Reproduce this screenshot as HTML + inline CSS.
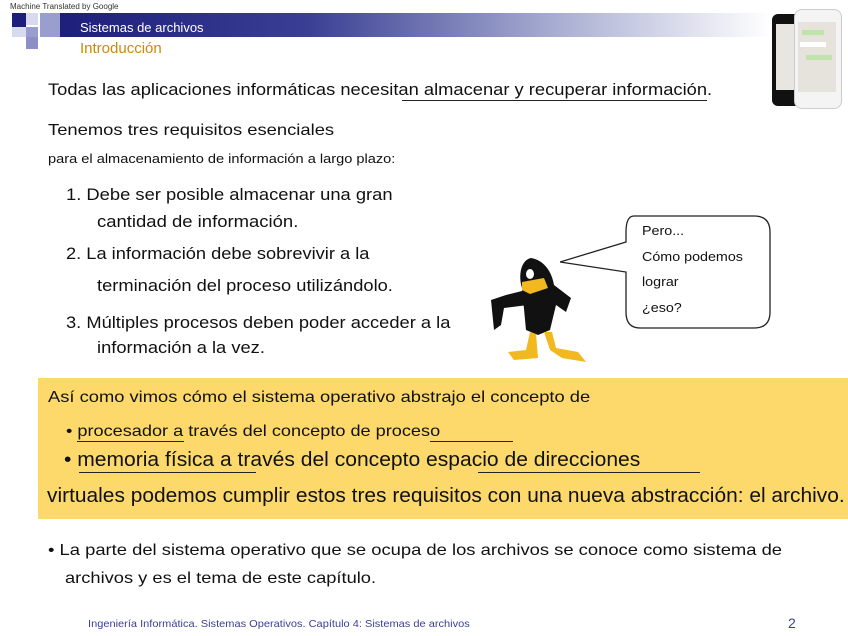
<!DOCTYPE html>
<html><head><meta charset="utf-8"><style>
body{margin:0;width:848px;height:636px;position:relative;background:#fff;font-family:"Liberation Sans",sans-serif;color:#111;overflow:hidden}
.a{position:absolute;white-space:nowrap;transform-origin:0 0}
.u{position:absolute;height:1px;background:#222}
</style></head><body>
<div class="a" style="left:10px;top:2px;font-size:8px;color:#333">Machine Translated by Google</div>
<div style="position:absolute;left:60px;top:13px;width:710px;height:24px;background:linear-gradient(90deg,#1d1f7a 0%,#3a3f94 35%,#a9aed2 70%,#fff 100%)"></div>
<div style="position:absolute;left:12px;top:13px;width:14px;height:14px;background:#1d1f7a"></div>
<div style="position:absolute;left:26px;top:13px;width:12px;height:12px;background:#d8daf0"></div>
<div style="position:absolute;left:40px;top:13px;width:20px;height:24px;background:#9a9ecf"></div>
<div style="position:absolute;left:26px;top:27px;width:12px;height:10px;background:#9a9ecf"></div>
<div style="position:absolute;left:26px;top:37px;width:12px;height:12px;background:#8c90c6"></div>
<div style="position:absolute;left:12px;top:27px;width:14px;height:10px;background:#d8daf0"></div>
<div class="a" style="left:80px;top:20px;font-size:13px;color:#fff">Sistemas de archivos</div>
<div class="a" style="left:80px;top:40px;font-size:15px;color:#c98a0a">Introducción</div>
<!-- phones -->
<div style="position:absolute;left:772px;top:14px;width:36px;height:92px;background:#111;border-radius:6px"></div>
<div style="position:absolute;left:776px;top:24px;width:30px;height:66px;background:#e8e6e0"></div>
<div style="position:absolute;left:794px;top:9px;width:46px;height:98px;background:#f4f4f4;border:1px solid #ccc;border-radius:8px"></div>
<div style="position:absolute;left:798px;top:22px;width:38px;height:70px;background:#e6e3dc"></div>
<div style="position:absolute;left:802px;top:30px;width:22px;height:5px;background:#bfe3a8"></div>
<div style="position:absolute;left:800px;top:42px;width:26px;height:5px;background:#fff"></div>
<div style="position:absolute;left:806px;top:55px;width:26px;height:5px;background:#bfe3a8"></div>

<div class="a" style="left:48px;top:80px;font-size:17px;transform:scaleX(1.078)">Todas las aplicaciones informáticas necesitan almacenar y recuperar información.</div>
<div class="u" style="left:402px;top:100px;width:305px"></div>
<div class="a" style="left:48px;top:122px;font-size:16px;transform:scaleX(1.149)">Tenemos tres requisitos esenciales</div>
<div class="a" style="left:48px;top:152px;font-size:12.5px;transform:scaleX(1.168)">para el almacenamiento de información a largo plazo:</div>
<div class="a" style="left:66px;top:185px;font-size:17px;transform:scaleX(1.08)">1. Debe ser posible almacenar una gran</div>
<div class="a" style="left:97px;top:212px;font-size:17px;transform:scaleX(1.087)">cantidad de información.</div>
<div class="a" style="left:66px;top:244px;font-size:17px;transform:scaleX(1.074)">2. La información debe sobrevivir a la</div>
<div class="a" style="left:97px;top:276px;font-size:17px;transform:scaleX(1.076)">terminación del proceso utilizándolo.</div>
<div class="a" style="left:66px;top:313px;font-size:17px;transform:scaleX(1.076)">3. Múltiples procesos deben poder acceder a la</div>
<div class="a" style="left:97px;top:338px;font-size:17px;transform:scaleX(1.077)">información a la vez.</div>

<!-- duck -->
<svg style="position:absolute;left:486px;top:250px" width="110" height="118" viewBox="0 0 110 118">
<path d="M45 8 C35 10 32 25 36 38 L40 80 L52 85 L64 80 L70 55 L80 62 L85 48 L68 35 C66 22 58 10 45 8Z" fill="#111"/>
<path d="M40 40 L20 45 L5 50 L8 80 L15 75 L18 58 L42 55Z" fill="#111"/>
<path d="M36 32 L58 28 L62 38 L44 44 L36 40Z" fill="#f2b81f"/>
<path d="M44 82 L40 100 L22 102 L28 110 L52 108 L50 84Z" fill="#f2b81f"/>
<path d="M58 82 L64 100 L76 108 L100 112 L92 102 L70 98 L66 82Z" fill="#f2b81f"/>
<ellipse cx="44" cy="24" rx="4" ry="5" fill="#fff"/>
</svg>
<!-- bubble -->
<svg style="position:absolute;left:560px;top:212px" width="215" height="120">
<path d="M74 4 H194 Q210 4 210 20 V100 Q210 116 194 116 H80 Q66 116 66 100 V60 L0 50 L66 30 V20 Q66 4 74 4Z" fill="#fff" stroke="#222" stroke-width="1.3"/>
</svg>
<div class="a" style="left:642px;top:223px;font-size:13px;transform:scaleX(1.1)">Pero...</div>
<div class="a" style="left:642px;top:249px;font-size:13px;transform:scaleX(1.1)">Cómo podemos</div>
<div class="a" style="left:642px;top:274px;font-size:13px;transform:scaleX(1.1)">lograr</div>
<div class="a" style="left:642px;top:300px;font-size:13px;transform:scaleX(1.1)">¿eso?</div>

<div style="position:absolute;left:38px;top:378px;width:810px;height:141px;background:#fcd96a"></div>
<div class="a" style="left:48px;top:389px;font-size:16px;transform:scaleX(1.146)">Así como vimos cómo el sistema operativo abstrajo el concepto de</div>
<div class="a" style="left:66px;top:423px;font-size:16px;transform:scaleX(1.133)">• procesador a través del concepto de proceso</div>
<div class="u" style="left:77px;top:441px;width:107px"></div>
<div class="u" style="left:430px;top:441px;width:83px"></div>
<div class="a" style="left:64px;top:449px;font-size:20px;transform:scaleX(1.053)">• memoria física a través del concepto espacio de direcciones</div>
<div class="u" style="left:79px;top:472px;width:177px"></div>
<div class="u" style="left:478px;top:472px;width:222px"></div>
<div class="a" style="left:47px;top:485px;font-size:20px;transform:scaleX(1.046)">virtuales podemos cumplir estos tres requisitos con una nueva abstracción: el archivo.</div>

<div class="a" style="left:48px;top:542px;font-size:16px;transform:scaleX(1.149)">• La parte del sistema operativo que se ocupa de los archivos se conoce como sistema de</div>
<div class="a" style="left:65px;top:570px;font-size:16px;transform:scaleX(1.143)">archivos y es el tema de este capítulo.</div>
<div class="a" style="left:88px;top:618px;font-size:10.5px;color:#3a3f94;transform:scaleX(1.05)">Ingeniería Informática. Sistemas Operativos. Capítulo 4: Sistemas de archivos</div>
<div class="a" style="left:788px;top:615px;font-size:14px;color:#3a3f94">2</div>
</body></html>
